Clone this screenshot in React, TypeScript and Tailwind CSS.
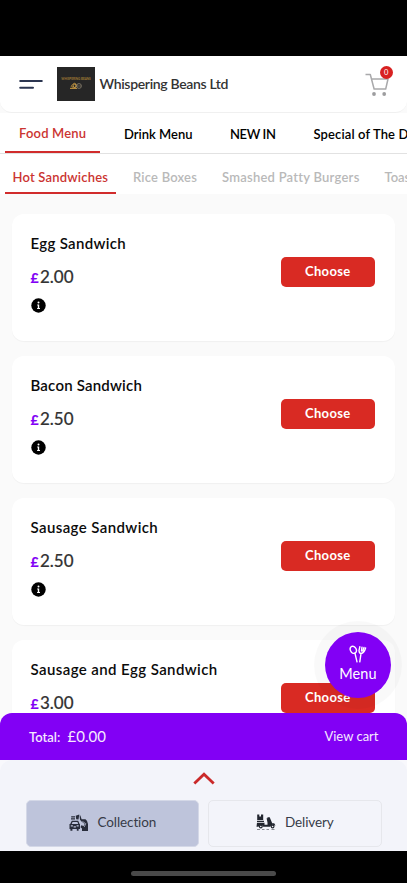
import React from "react";

const items = [
  { name: "Egg Sandwich", price: "2.00", track: "tracking-[0.33px]" },
  { name: "Bacon Sandwich", price: "2.50", track: "tracking-[0.2px]" },
  { name: "Sausage Sandwich", price: "2.50", track: "tracking-[0.4px]" },
  { name: "Sausage and Egg Sandwich", price: "3.00", track: "tracking-[0.41px]" },
];

function Logo() {
  return (
    <div className="ml-[14px] flex h-[34px] w-[38px] shrink-0 flex-col items-center bg-[#262626] pt-[10px]">
      <span className="text-[3px] leading-[4px] font-bold whitespace-nowrap text-[#a17b35]">WHISPERING BEANS</span>
      <svg width="14" height="8" viewBox="0 0 14 8" fill="none" className="mt-px">
        <path d="M2 5.5 C3 1 7 0 7 3 C7 6 3 7 3.5 4.5 M1 6.5H8" stroke="#b48a3c" strokeWidth="1" />
        <circle cx="5.8" cy="3.8" r="1.7" stroke="#c69a45" strokeWidth="1" />
        <circle cx="10" cy="4" r="2.4" stroke="#8b8371" strokeWidth=".8" />
        <path d="M8 4h4" stroke="#8b8371" strokeWidth=".6" />
      </svg>
    </div>
  );
}

function Header() {
  return (
    <header className="flex h-[57px] items-center rounded-b-xl border-b border-[#f0f0f0] bg-white pl-[19px]">
      <svg width="24" height="12" viewBox="0 0 24 12" className="shrink-0" stroke="#2b3550" strokeWidth="2" strokeLinecap="round">
        <path d="M1.2 3H22.8M1.2 9.7H14" />
      </svg>
      <Logo />
      <h1 className="mt-[-2px] ml-[4.5px] text-[14px] font-semibold tracking-[-0.33px] whitespace-nowrap text-[#333]">Whispering Beans Ltd</h1>
      <div className="relative mt-[-4px] mr-[14px] ml-auto h-[32px] w-[28px]">
        <svg width="28" height="32" viewBox="0 0 28 32" fill="none">
          <path d="M.5 8.5H5.3L9.1 23H20.7L23 13H6.7" stroke="#a9a9ab" strokeWidth="1.5" strokeLinejoin="round" />
          <circle cx="9" cy="28" r="1.9" fill="#9d9d9f" />
          <circle cx="19.2" cy="28" r="1.9" fill="#9d9d9f" />
        </svg>
        <span className="absolute top-0 left-[15px] flex size-[12.5px] items-center justify-center rounded-full bg-[#d82121] text-[7.5px] text-white">0</span>
      </div>
    </header>
  );
}

function InfoIcon() {
  return (
    <svg width="15" height="15" viewBox="0 0 15 15" className="mt-[10px]">
      <circle cx="7.5" cy="7.5" r="7.2" fill="#000" />
      <circle cx="7.5" cy="4.5" r="1" fill="#fff" />
      <path d="M6.2 6.5H8.2V10H9V11H6.1V10H6.8V7.4H6.2Z" fill="#fff" />
    </svg>
  );
}

function CollectionIcon() {
  return (
    <svg width="20" height="18" viewBox="0 0 20 18" className="shrink-0" fill="#292d3b">
      <path d="M2.2 2.2H6V3.4H2.2ZM2 4.2H6V5.4H2ZM6.7 1.7 10.3.5 9.5 5.6 7.2 5.2Z" />
      <path fillRule="evenodd" d="M2.8 6.7H9.2L10.6 10H11V15H9.6V16.7H7.8V15H3.4V16.7H1.4V15H.5V10H1.2ZM3.6 7.9 2.7 10H9.2L8.4 7.9ZM1.8 11.2V12.6H3.9V11.2ZM7.6 11.2V12.6H9.7V11.2ZM4.6 12.3V13.4H6.9V12.3Z" />
      <path d="M11.4 1.5 12.6 5.3H16.5Q18.8 7 19 10V17H13V14.4L11.5 13.2 12.3 11.2 14.7 12 15.8 10 12.5 7.6 11 5.8 10.6 1.5Z" />
      <path d="M13.4 7.4 16.8 9.7 15.2 13" fill="none" stroke="#bec4db" strokeWidth=".7" />
    </svg>
  );
}

function DeliveryIcon() {
  return (
    <svg width="20" height="17" viewBox="0 0 20 17" className="shrink-0" fill="#22262f">
      <path d="M1.2.5H3.3V2.5H5V.5H7.2V6H1.2ZM1 6.8H8V8H1ZM1 8.8H8.5V10.8H11.5V8.5L10.6 4.3H11.5V3.2H13.7L16.2 9.2H18.2L19.5 11.5H18.2Q16 9.5 14.2 12.8H7.2Q5.5 9.4 2.4 12.8H.5Z" />
      <circle cx="4.8" cy="12.5" r="1.9" />
      <circle cx="16.6" cy="12.5" r="1.9" />
      <circle cx="4.8" cy="12.5" r=".8" fill="#f3f4fa" />
      <circle cx="16.6" cy="12.5" r=".8" fill="#f3f4fa" />
      <path d="M1 15.4H4V16.1H1ZM6 15.4H8.5V16.1H6ZM10.5 15.4H13V16.1H10.5ZM15.5 15.4H18.5V16.1H15.5Z" />
    </svg>
  );
}

export default function App() {
  return (
    <div className="flex h-[883px] w-[407px] flex-col overflow-hidden bg-black font-['Lato','Open_Sans',sans-serif] [font-variant-ligatures:none]">
      <div className="h-[56px] shrink-0" />
      <main className="relative flex h-[794.5px] shrink-0 flex-col overflow-hidden bg-[#fafafa]">
        <Header />
        <nav className="flex h-[41px] shrink-0 overflow-hidden border-b border-[#e2e2e2] bg-white text-[13px] font-semibold whitespace-nowrap text-black">
          <a className="ml-[5px] h-[39.5px] w-[95px] shrink-0 border-b-2 border-[#d12c2c] pl-[14px] leading-[40px] tracking-[0.18px] text-[#cb3431]">Food Menu</a>
          <a className="ml-[24px] w-[82px] shrink-0 leading-[42px]">Drink Menu</a>
          <a className="ml-[24px] w-[59px] shrink-0 leading-[42px] tracking-[-0.4px]">NEW IN</a>
          <a className="ml-[24.5px] shrink-0 leading-[42px] tracking-[0.12px]">Special of The Day</a>
        </nav>
        <nav className="flex h-[40px] shrink-0 overflow-hidden bg-white text-[13px] font-semibold whitespace-nowrap text-[#b9b9b9]">
          <a className="ml-[5px] h-[39.5px] w-[111px] shrink-0 border-b-2 border-[#d12c2c] pl-[7.5px] leading-[46px] tracking-[0.2px] text-[#cb3431]">Hot Sandwiches</a>
          <a className="ml-[17px] w-[89px] shrink-0 leading-[47px] tracking-[0.2px]">Rice Boxes</a>
          <a className="w-[162.5px] shrink-0 leading-[47px] tracking-[0.24px]">Smashed Patty Burgers</a>
          <a className="shrink-0 leading-[47px]">Toasties</a>
        </nav>
        <section className="flex flex-col gap-[15px] px-3 pt-5">
          {items.map((item) => (
            <article key={item.name} className="flex h-[127px] shrink-0 justify-between rounded-xl bg-white pr-5 pl-[18.5px] shadow-[0_1px_1px_rgba(0,0,0,0.04)]">
              <div className="pt-[19px]">
                <h2 className={`text-[15px] leading-[20px] font-semibold whitespace-nowrap text-[#0b0b0b] ${item.track}`}>{item.name}</h2>
                <p className="mt-[14px] flex items-baseline text-[17px] leading-[20px] font-medium text-[#333] [-webkit-text-stroke:0.15px]">
                  <span className="w-[9.5px] text-[14px] font-bold text-[#8200f5]">£</span>
                  {item.price}
                </p>
                <InfoIcon />
              </div>
              <button className="mt-[43px] h-[30px] w-[94.5px] rounded-[5px] bg-[#d92a23] pb-[2px] text-[13px] leading-[28px] font-bold tracking-[0.3px] text-white">Choose</button>
            </article>
          ))}
        </section>

        <button className="absolute top-[564.5px] left-[314px] flex size-[88px] items-center justify-center rounded-full bg-black/[0.025]">
          <span className="flex size-[66px] flex-col items-center rounded-full bg-[#8200f5] pt-[13px] text-white">
            <svg width="18" height="19" viewBox="0 0 18 19" fill="none" stroke="white" strokeWidth="1.4" strokeLinecap="round" strokeLinejoin="round">
              <ellipse cx="4.3" cy="4.8" rx="2.9" ry="3.7" transform="rotate(-25 4.3 4.8)" />
              <path d="M6 8.3 8 16.8M10.8 1.8 10 5.7Q10.2 8.3 12 8.5Q15.2 8 16.6 3M13 2.2 12.4 6M15 2.4 13.8 6M12 8.5 10.8 16.8" />
            </svg>
            <span className="text-[14.5px] leading-[20px] tracking-[0.1px]">Menu</span>
          </span>
        </button>

        <footer className="absolute inset-x-0 bottom-0 h-[137.5px]">
          <div className="flex h-[47px] rounded-t-xl bg-[#8200f5] pr-[28.5px] pl-[29px] text-[#f5e9ff]">
            <span className="w-[38.5px] text-[13px] leading-[48px] font-semibold">Total:</span>
            <span className="text-[15px] leading-[47px]">£0.00</span>
            <span className="ml-auto text-[13px] leading-[46px]">View cart</span>
          </div>
          <div className="bg-[#f8f8fc]">
            <div className="flex h-[90.5px] flex-col items-center rounded-t-xl bg-[#f3f4fa]">
              <svg width="22" height="14" viewBox="0 0 22 14" className="mt-[10.5px] shrink-0" fill="none" stroke="#ca2929" strokeWidth="2.8">
                <path d="M1.3 12.5 11 3.2 20.7 12.5" />
              </svg>
              <div className="mt-[15px] flex w-full gap-[9px] pl-[26px] text-[13.5px] text-[#373b47]">
                <button className="flex h-[47px] w-[173px] items-center gap-[8.5px] rounded-[5px] border border-[#d4d8e7] bg-[#bec4db] pb-px pl-[42px] tracking-[-0.1px]">
                  <CollectionIcon />
                  Collection
                </button>
                <button className="flex h-[47px] w-[173.5px] items-center gap-[9px] rounded-[5px] border border-[#e6e7ec] bg-[#f3f4fa] pb-px pl-[47px] tracking-[-0.1px]">
                  <DeliveryIcon />
                  Delivery
                </button>
              </div>
            </div>
          </div>
        </footer>
      </main>
      <div className="mx-auto mt-[20px] h-[5px] w-[145px] shrink-0 rounded-full bg-[#4a4a4a]" />
    </div>
  );
}
